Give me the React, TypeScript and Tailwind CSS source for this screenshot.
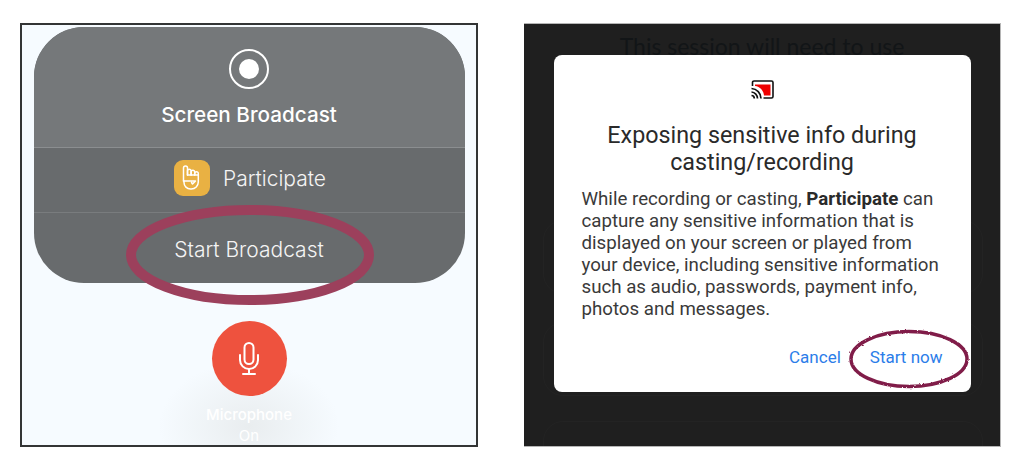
const bodyFont = "font-['Roboto',sans-serif]";

const HandIcon = () => (
  <svg viewBox="0 0 36 36" className="h-9 w-9" fill="none" stroke="#fff" strokeWidth="1.5" strokeLinecap="round" strokeLinejoin="round">
    <path d="M9.500 21V8a2 2 0 0 1 4 0v7" />
    <path d="M13.500 15v-4a1.800 1.800 0 0 1 3.600 0v4" />
    <path d="M17.100 15v-3a1.800 1.800 0 0 1 3.600 0v3" />
    <path d="M20.700 15v-1.500a1.800 1.800 0 0 1 3.600 0V22a7 7 0 0 1-7 7h-.8a6.500 6.500 0 0 1-6.500-6.500V21" />
    <path d="M9.500 21h12l-3 3-1-1.500" />
    <path d="M13.500 15h10.800" />
  </svg>
);

const MicIcon = () => (
  <svg viewBox="0 0 24 36" className="h-9 w-6" fill="none" stroke="#fff" strokeWidth="2" strokeLinecap="round">
    <rect x="7.5" y="2" width="9" height="21" rx="4.5" />
    <path d="M3 14v5a9 9 0 0 0 18 0v-5" />
    <path d="M12 28v5M6 33h12" />
  </svg>
);

const CastIcon = () => (
  <svg viewBox="0 0 23 19" className="h-[19px] w-[23px]">
    <path d="M1.5 6V2.5a1.5 1.5 0 0 1 1.500-1.500h17.500a1.500 1.500 0 0 1 1.500 1.500v14a1.500 1.500 0 0 1-1.500 1.500h-8" fill="none" stroke="#111" strokeWidth="1.600" />
    <path d="M4 4.500h15.500v11h-6.500c-.5-5-4-9-9-9.500z" fill="#f00000" />
    <g fill="none" stroke="#111" strokeWidth="1.700">
      <path d="M.5 8.500a10 10 0 0 1 9.500 10" />
      <path d="M.5 12a6.500 6.500 0 0 1 6 6.500" />
      <path d="M.5 15.500a3 3 0 0 1 2.800 3" />
    </g>
  </svg>
);

const PhoneCapture = () => (
  <div className="relative flex h-[424px] w-[458px] flex-col items-center overflow-hidden border-2 border-[#333535] bg-[#f6fbff] font-['Inter',sans-serif]">
    <div className="mt-[2px] flex h-[256px] w-[431px] shrink-0 flex-col overflow-hidden rounded-[50px] bg-[#686b6d] text-white">
      <div className="flex h-[121px] shrink-0 flex-col items-center border-b border-[#8b8e90] bg-[#75787a]">
        <div className="mt-[22px] flex h-10 w-10 items-center justify-center rounded-full border-2 border-white">
          <div className="h-5 w-5 rounded-full bg-white" />
        </div>
        <p className="mt-[14px] text-[20.7px] leading-6 font-medium">Screen Broadcast</p>
      </div>
      <div className="flex h-[65px] shrink-0 items-center justify-center gap-[13px] border-b border-[#797c7e] pb-[4px] pl-[2px]">
        <div className="flex h-9 w-9 items-center justify-center rounded-[9px] bg-[#e9b143]">
          <HandIcon />
        </div>
        <span className="mt-[2px] text-[21px] font-light text-[#f4f4f4]">Participate</span>
      </div>
      <div className="flex flex-1 items-center justify-center pt-[3px]">
        <span className="text-[21px] font-light text-[#f4f4f4]">Start Broadcast</span>
      </div>
    </div>
    <div className="relative mt-[38px] flex flex-col items-center">
      <div className="absolute top-[40px] h-[130px] w-[180px] rounded-full bg-[radial-gradient(closest-side,#e9edef,#f6fbff00)]" />
      <div className="relative flex h-[75px] w-[75px] shrink-0 items-center justify-center rounded-full bg-[#ee523e]">
        <MicIcon />
      </div>
      <p className="relative mt-[8px] text-[15px] leading-[21px] font-medium text-white">Microphone</p>
      <p className="relative text-[15px] leading-[21px] text-white">On</p>
    </div>
    <svg viewBox="0 0 250 102" className="absolute top-[179px] left-[103px] h-[102px] w-[250px]" fill="none">
      <ellipse cx="125" cy="51" rx="119" ry="45" stroke="#9c405c" strokeWidth="10" />
    </svg>
  </div>
);

const CastDialog = () => (
  <div className={`relative flex h-[424px] w-[477px] flex-col items-center overflow-hidden border-t border-r border-b border-[#b5b5b5] bg-[#1f1f1f] ${bodyFont}`}>
    <div className="absolute top-[196px] left-[19px] h-[74px] w-[440px] rounded-[20px] border border-[#232323]" />
    <div className="absolute top-[298px] left-[19px] h-[74px] w-[440px] rounded-[20px] border border-[#232323]" />
    <div className="absolute top-[397px] left-[19px] h-[60px] w-[440px] rounded-[20px] border border-[#232323]" />
    <p className="relative h-[31px] shrink-0 pt-[10px] text-[23px] leading-[24px] whitespace-nowrap text-[#121517] font-['Lato',sans-serif]">This session will need to use</p>
    <div className="relative flex h-[337px] w-[417px] shrink-0 flex-col rounded-[8px] bg-white px-[28px] text-[#333]">
      <div className="mt-[25px] flex justify-center">
        <CastIcon />
      </div>
      <h2 className="mt-[23px] text-center text-[23.3px] leading-[27px] font-normal whitespace-nowrap text-[#2a2a2a]">
        Exposing sensitive info during
        <br />
        casting/recording
      </h2>
      <p className="mt-[12px] text-[18.7px] leading-[22px] whitespace-nowrap text-[#3a3a3a]">
        While recording or casting, <strong className="font-bold text-[#2a2a2a]">Participate</strong> can
        <br />
        capture any sensitive information that is
        <br />
        displayed on your screen or played from
        <br />
        your device, including sensitive information
        <br />
        such as audio, passwords, payment info,
        <br />
        photos and messages.
      </p>
      <div className="mt-[27px] flex justify-end gap-[29px] text-[17px] leading-[20px] text-[#2b7de9]">
        <span>Cancel</span>
        <span>Start now</span>
      </div>
    </div>
    <svg viewBox="0 0 124 64" className="absolute top-[303px] left-[323px] h-16 w-[124px]" fill="none">
      <defs>
        <filter id="rough" x="-5%" y="-10%" width="110%" height="120%">
          <feTurbulence type="fractalNoise" baseFrequency="0.5" numOctaves="2" seed="4" />
          <feDisplacementMap in="SourceGraphic" scale="2.5" />
        </filter>
      </defs>
      <ellipse cx="62" cy="32" rx="58" ry="27.500" stroke="#801f48" strokeWidth="3.500" filter="url(#rough)" />
    </svg>
  </div>
);

export default function App() {
  return (
    <div className="flex h-[475px] w-[1024px] items-start gap-[46px] overflow-hidden bg-white pt-[23px] pl-[20px]">
      <PhoneCapture />
      <CastDialog />
    </div>
  );
}
